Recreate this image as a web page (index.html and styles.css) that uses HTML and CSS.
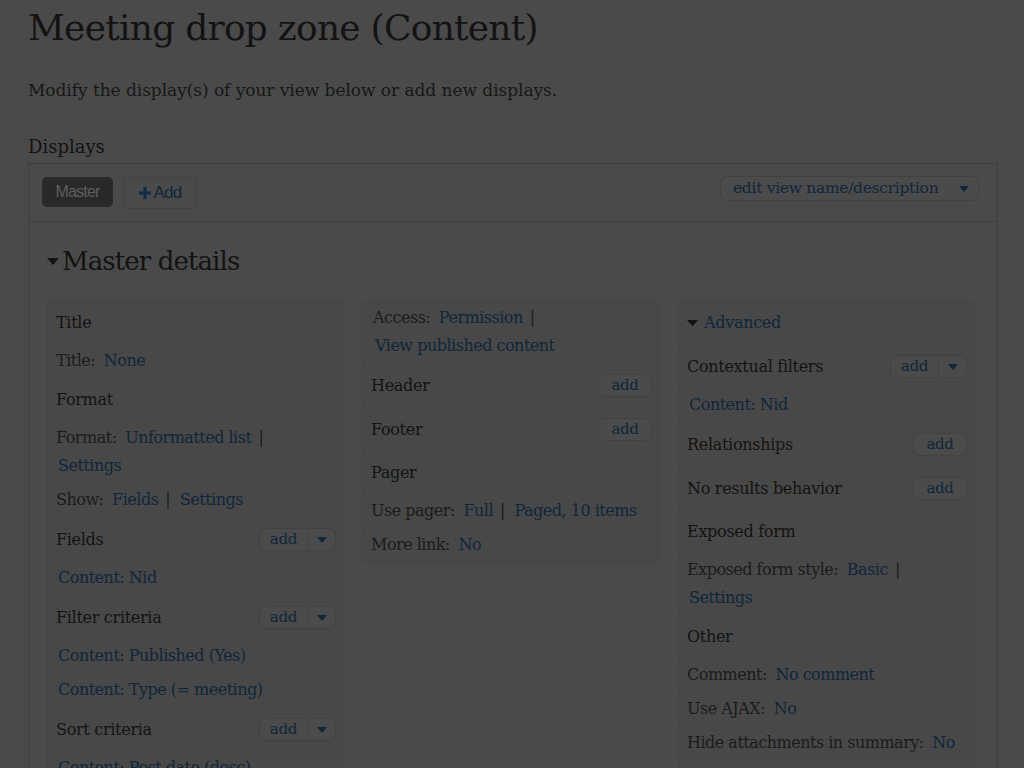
FILE: index.html
```html
<!DOCTYPE html>
<html>
<head>
<meta charset="utf-8">
<title>Meeting drop zone (Content)</title>
<link rel="stylesheet" href="styles.css">
</head>
<body>
<div class="page">
  <h1 class="page-title">Meeting drop zone (Content)</h1>
  <p class="intro">Modify the display(s) of your view below or add new displays.</p>
  <div class="displays-label">Displays</div>
  <div class="displays">
    <div class="tabbar">
      <div class="tabs">
        <span class="tab tab-active">Master</span>
        <span class="tab tab-add"><svg class="plus" width="12" height="12" viewBox="0 0 12 12"><path d="M4.5 0h3v4.5H12v3H7.5V12h-3V7.5H0v-3h4.5z"/></svg>Add</span>
      </div>
      <div class="dropbutton dropbutton-wide">
        <span class="db-main">edit view name/description</span>
        <span class="db-arrow"><svg width="10" height="6" viewBox="0 0 10 6"><path d="M0 0h10L5 6z"/></svg></span>
      </div>
    </div>
    <div class="details">
      <h2 class="details-title"><svg class="tri" width="12" height="7" viewBox="0 0 12 7"><path d="M0 0h12L6 7z"/></svg>Master details</h2>
      <div class="columns">
        <div class="col">
          <div class="bucket">
            <div class="head"><span>Title</span></div>
            <div class="row"><span class="lbl">Title:</span> <a>None</a></div>
          </div>
          <div class="bucket">
            <div class="head"><span>Format</span></div>
            <div class="row"><span class="lbl">Format:</span> <a>Unformatted list</a><span class="sep">|</span> <a>Settings</a></div>
            <div class="row"><span class="lbl">Show:</span> <a>Fields</a><span class="sep">|</span> <a>Settings</a></div>
          </div>
          <div class="bucket">
            <div class="head has-btn"><span>Fields</span>
              <span class="dropbutton"><span class="db-main">add</span><span class="db-arrow"><svg width="10" height="6" viewBox="0 0 10 6"><path d="M0 0h10L5 6z"/></svg></span></span>
            </div>
            <div class="row"><a>Content: Nid</a></div>
          </div>
          <div class="bucket">
            <div class="head has-btn"><span>Filter criteria</span>
              <span class="dropbutton"><span class="db-main">add</span><span class="db-arrow"><svg width="10" height="6" viewBox="0 0 10 6"><path d="M0 0h10L5 6z"/></svg></span></span>
            </div>
            <div class="row"><a>Content: Published (Yes)</a></div>
            <div class="row"><a>Content: Type (= meeting)</a></div>
          </div>
          <div class="bucket">
            <div class="head has-btn"><span>Sort criteria</span>
              <span class="dropbutton"><span class="db-main">add</span><span class="db-arrow"><svg width="10" height="6" viewBox="0 0 10 6"><path d="M0 0h10L5 6z"/></svg></span></span>
            </div>
            <div class="row"><a>Content: Post date (desc)</a></div>
          </div>
        </div>

        <div class="col">
          <div class="bucket">
            <div class="row first"><span class="lbl">Access:</span> <a>Permission</a><span class="sep">|</span> <a>View published content</a></div>
          </div>
          <div class="bucket">
            <div class="head has-btn"><span>Header</span><span class="btn">add</span></div>
          </div>
          <div class="bucket">
            <div class="head has-btn"><span>Footer</span><span class="btn">add</span></div>
          </div>
          <div class="bucket">
            <div class="head"><span>Pager</span></div>
            <div class="row"><span class="lbl">Use pager:</span> <a>Full</a><span class="sep">|</span> <a>Paged, 10 items</a></div>
            <div class="row"><span class="lbl">More link:</span> <a>No</a></div>
          </div>
        </div>

        <div class="col">
          <div class="bucket">
            <div class="head adv"><svg class="tri-s" width="11" height="6" viewBox="0 0 11 6"><path d="M0 0h11L5.5 6z"/></svg><a>Advanced</a></div>
          </div>
          <div class="bucket">
            <div class="head has-btn"><span>Contextual filters</span>
              <span class="dropbutton"><span class="db-main">add</span><span class="db-arrow"><svg width="10" height="6" viewBox="0 0 10 6"><path d="M0 0h10L5 6z"/></svg></span></span>
            </div>
            <div class="row"><a>Content: Nid</a></div>
          </div>
          <div class="bucket">
            <div class="head has-btn"><span>Relationships</span><span class="btn">add</span></div>
          </div>
          <div class="bucket">
            <div class="head has-btn"><span>No results behavior</span><span class="btn">add</span></div>
          </div>
          <div class="bucket">
            <div class="head"><span>Exposed form</span></div>
            <div class="row"><span class="lbl">Exposed form style:</span> <a>Basic</a><span class="sep">|</span> <a>Settings</a></div>
          </div>
          <div class="bucket">
            <div class="head"><span>Other</span></div>
            <div class="row"><span class="lbl">Comment:</span> <a>No comment</a></div>
            <div class="row"><span class="lbl">Use AJAX:</span> <a>No</a></div>
            <div class="row"><span class="lbl">Hide attachments in summary:</span> <a>No</a></div>
            <div class="row"><span class="lbl">Hide attachments in summary:</span> <a>No</a></div>
          </div>
        </div>
      </div>
    </div>
  </div>
</div>
</body>
</html>
```

FILE: styles.css
```css
html, body {
  margin: 0;
  padding: 0;
  background: #4a4a4a;
  color: #131313;
  font-family: "DejaVu Serif", "Liberation Serif", serif;
  height: 768px;
  overflow: hidden;
}

a {
  color: #10263b;
  text-decoration: none;
  white-space: nowrap;
}

.page {
  padding: 0 0 0 28px;
  width: 970px;
}

.page-title {
  margin: 0;
  padding-top: 8px;
  font-size: 36px;
  font-weight: normal;
  line-height: 40px;
  letter-spacing: -0.75px;
}

.intro {
  margin: 32px 0 0;
  font-size: 17px;
  line-height: 20px;
  color: #171717;
  letter-spacing: -0.05px;
}

.displays-label {
  margin-top: 37px;
  font-size: 18px;
  line-height: 20px;
}

.displays {
  margin-top: 6px;
  border: 1px solid #3f3f3f;
  border-bottom: none;
  height: 700px;
}

.tabbar {
  display: flex;
  justify-content: space-between;
  align-items: flex-start;
  height: 57px;
  padding: 0 18px 0 13px;
  border-bottom: 1px solid #3f3f3f;
}

.tabs {
  display: flex;
  gap: 10px;
  margin-top: 13px;
}

.tab {
  display: flex;
  align-items: center;
  height: 30px;
  box-sizing: border-box;
  border-radius: 5px;
  font-family: "Liberation Sans", Arial, sans-serif;
  font-size: 16px;
  letter-spacing: -0.8px;
}

.tab-active {
  background: #292929;
  color: #5e5e5e;
  width: 71px;
  justify-content: center;
}

.tab-add {
  width: 74px;
  height: 32px;
  border: 1px solid #424242;
  color: #10263b;
  justify-content: center;
  gap: 3px;
  font-size: 17px;
}

.plus path { fill: #0f2a44; }

.dropbutton {
  display: inline-flex;
  align-items: stretch;
  height: 23px;
  box-sizing: border-box;
  border: 1px solid #424242;
  border-radius: 7px;
  font-size: 15px;
  line-height: 21px;
  color: #10263b;
  background: #4b4b4b;
}

.db-main {
  padding: 0 10px;
  border-right: 1px solid #444;
}

.db-arrow {
  display: flex;
  align-items: center;
  justify-content: center;
  width: 27px;
}

.db-arrow path { fill: #10263b; }

.dropbutton-wide {
  margin-top: 12px;
  height: 25px;
  width: 259px;
  line-height: 23px;
  font-size: 15.5px;
  letter-spacing: -0.3px;
}

.dropbutton-wide .db-main {
  padding: 0 0 0 12px;
  flex: 1;
  border-right: none;
}

.dropbutton-wide .db-arrow { width: 28px; }

.details {
  padding: 24px 23px 0 18px;
}

.details-title {
  margin: 0;
  display: flex;
  align-items: center;
  gap: 3px;
  font-size: 26px;
  font-weight: normal;
  line-height: 30px;
  letter-spacing: -0.9px;
}

.tri path { fill: #131313; }

.columns {
  display: grid;
  grid-template-columns: 297px 298px 297px;
  column-gap: 18px;
  margin-top: 25px;
  align-items: start;
}

.col {
  background: #484848;
  border: 1px solid #464646;
}

.bucket + .bucket {
  border-top: 1px solid #444;
}

.head {
  display: flex;
  align-items: center;
  justify-content: space-between;
  padding: 10px 7px 10px 8px;
  font-size: 16px;
  line-height: 22px;
  letter-spacing: -0.3px;
}

.head.has-btn {
  padding-top: 10px;
  padding-bottom: 10px;
}

.head.adv {
  justify-content: flex-start;
  gap: 6px;
}

.tri-s path { fill: #131313; }

.row {
  padding: 2px 9px 3px 8px;
  border-top: 1px solid #464646;
  font-size: 16px;
  line-height: 28px;
  color: #1b1b1b;
  letter-spacing: -0.5px;
}

.row.first {
  border-top: none;
  padding-left: 10px;
}

.row .lbl {
  margin-right: 2px;
}

.row a {
  padding: 0 2px;
}

.row .sep {
  margin: 0 3px 0 5px;
}

.btn {
  display: inline-block;
  box-sizing: border-box;
  width: 54px;
  height: 23px;
  border: 1px solid #424242;
  border-radius: 7px;
  text-align: center;
  font-size: 15px;
  line-height: 21px;
  color: #10263b;
  background: #4b4b4b;
}
```
